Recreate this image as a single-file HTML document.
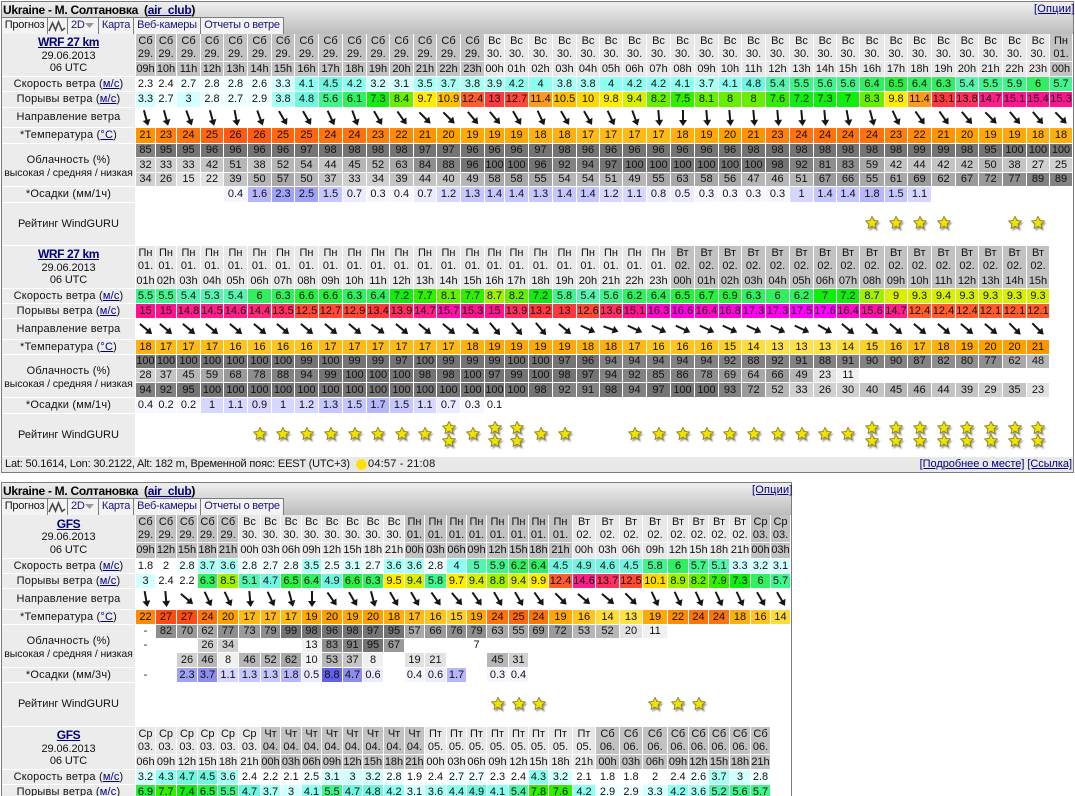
<!DOCTYPE html>
<html><head><meta charset="utf-8"><title>WindGURU</title>
<style>
html,body{margin:0;padding:0;width:1075px;height:796px;overflow:hidden;background:#fff}
body{position:relative;font:11px "Liberation Sans",Arial,sans-serif;color:#111}
.box{position:absolute;left:1px;border:1px solid #7c7c7c;box-sizing:border-box;background:#fff}
.bar{position:absolute;left:2px;height:32px;background:linear-gradient(#efefef,#bcbcbc)}
.ttl{position:absolute;left:3px;font:bold 12px/14px "Liberation Sans",sans-serif;color:#000;white-space:pre;letter-spacing:-.3px}
a{color:#000080;text-decoration:underline}
.op{position:absolute;font-size:11px;line-height:13px;letter-spacing:.2px}
.tabs{position:absolute;left:2px;height:16px;width:282px;border-top:1px solid #7c7c7c;background:#f3f3f3;box-sizing:content-box}
.tabs b{position:absolute;top:0;height:16px;font-weight:normal;line-height:15px;text-align:center;border-right:1px solid #7c7c7c;box-sizing:border-box;letter-spacing:-.25px;color:#14147a;white-space:nowrap}
.tabs b.k{color:#111}
table{position:absolute;border-collapse:separate;border-spacing:0;table-layout:fixed}
td{padding:0;border-right:1px solid #fff;border-bottom:1px solid #fff;box-sizing:border-box;text-align:center;vertical-align:middle;white-space:nowrap;overflow:hidden;line-height:13px;font-size:11px;color:#111}
td.l{background:#ececec;letter-spacing:.2px;color:#111}
td.l a{color:#000080}
td.l.z{letter-spacing:0}
td.l.c{padding-top:4px}
td.l.c span{font-size:10.5px;letter-spacing:-.1px}
td.n{letter-spacing:-.1px;line-height:12.5px;padding-top:1px}
td.n a{font-weight:bold;font-size:12px;letter-spacing:-.4px}
.nb td:not(.l){border-bottom-color:transparent}
.h28 td{height:28px}.h16 td{height:16px}.h15 td{height:15px}.h14 td{height:14px}.h20 td{height:20px}.h21 td{height:21px}.h43 td{height:43px}.h44 td{height:44px}
.d{background:#c2c2c2}.e{background:#e8e8e8}
i{display:block;width:2px;height:11px;background:#161616;position:relative;margin:0 auto 5px;transform-origin:50% 8px}
i:after{content:"";position:absolute;left:-3px;top:10px;border-left:4px solid transparent;border-right:4px solid transparent;border-top:6px solid #161616}
.r0{transform:none}.r5{transform:rotate(-5deg)}.r10{transform:rotate(-10deg)}.r15{transform:rotate(-15deg)}.r20{transform:rotate(-20deg)}.r25{transform:rotate(-25deg)}.r30{transform:rotate(-30deg)}.r35{transform:rotate(-35deg)}.r40{transform:rotate(-40deg)}.r45{transform:rotate(-45deg)}.r50{transform:rotate(-50deg)}.r55{transform:rotate(-55deg)}.r60{transform:rotate(-60deg)}.r65{transform:rotate(-65deg)}.r70{transform:rotate(-70deg)}
.w3,.w4{background:#fff}.w5{background:#f0ffff}.w6{background:#d2ffff}.w7{background:#aafff5}.w8{background:#8cfff0}.w9{background:#70f5e0}.w10{background:#55f5b0}.w11{background:#40f58c}.w12{background:#30f060}.w13{background:#28f040}.w14{background:#10ee10}.w15{background:#30f000}.w16{background:#66f000}.w17{background:#a0f000}.w18{background:#d8f000}.w19{background:#ffec00}.w20{background:#ffd800}.w21{background:#ffc000}.w22{background:#ff9a20}.w23{background:#ff8030}.w24{background:#ff5c30}.w25{background:#ff4838}.w26{background:#ff3840}.w27{background:#ff3060}.w28{background:#ff2878}.w29{background:#ff1e88}.w30{background:#ff1490}.w31{background:#ff10a8}.w32{background:#ff08c8}.w33{background:#ff00e0}.w34{background:#ff00f0}.w35{background:#ff00ff}
.t13{background:#ffe24a}.t14{background:#ffdc3c}.t15{background:#ffd02c}.t16{background:#ffc420}.t17{background:#ffba18}.t18{background:#ffb010}.t19{background:#ffa808}.t20{background:#ffa000}.t21{background:#ff9400}.t22{background:#ff8a08}.t23{background:#ff800e}.t24{background:#ff7210}.t25{background:#ff6612}.t26{background:#ff5a14}.t27{background:#ff4c14}
.g1{background:#f0f0f0}.g2{background:#e2e2e2}.g3{background:#d0d0d0}.g4{background:#c4c4c4}.g5{background:#b6b6b6}.g6{background:#a8a8a8}.g7{background:#9a9a9a}.g8{background:#8e8e8e}.g9{background:#828282}.g10{background:#747474}
.q1{background:#f6f6ff}.q2{background:#ebebff}.q3{background:#d6d6ff}.q4{background:#c6c6ff}.q5{background:#b6b6fb}.q6{background:#a2a2f4}.q7{background:#8c8cec}.q8{background:#6060e8}
svg.s{display:block;width:18px;height:18px;margin:0 auto 0 calc(50% - 8px)}
td.x svg.s{margin-top:-2px;margin-bottom:-5px}
td.x svg.s:last-child{margin-top:0;margin-bottom:-2px}
.foot{position:absolute;left:2px;top:457px;width:1071px;height:15px;background:#e8e8e8;line-height:15px;font-size:11px;letter-spacing:-.18px;white-space:nowrap}
</style></head><body>
<svg width="0" height="0" style="position:absolute"><defs><filter id="b" x="-30%" y="-30%" width="160%" height="160%"><feGaussianBlur stdDeviation=".9"/></filter>
<symbol id="st" viewBox="0 0 18 18"><polygon points="9.5,2.5 11.5,7.25 16.6,7.7 12.7,11 13.9,16.1 9.5,13.4 5.1,16.1 6.3,11 2.4,7.7 7.5,7.25" fill="#555" opacity=".6" filter="url(#b)"/><polygon points="8,1.300 9.900,5.500 14.500,5.900 11,9 12,13.500 8,11.100 4,13.500 5,9 1.500,5.900 6.100,5.500" fill="#efe400" stroke="#8f8420" stroke-width=".9" stroke-linejoin="round"/></symbol></defs></svg>

<div class="box" style="top:1px;width:1073px;height:472px"></div>
<div class="bar" style="top:2px;width:1071px"></div>
<div class="ttl" style="top:3px">Ukraine - М. Солтановка  (<a>air_club</a>)</div>
<a class="op" style="left:1034px;top:3px">[Опции]</a>
<div class="tabs" style="top:17px">
<b class="k" style="left:0;width:46px">Прогноз</b><b style="left:46px;width:20px"><svg width="19" height="14" style="display:block;margin-top:1px"><path d="M1 12 L4.500 4 L7.500 11 L10.500 3 L14 11.500 L17 9" fill="none" stroke="#4a4a4a" stroke-width="1.600"/></svg></b><b style="left:66px;width:31px;text-align:left;padding-left:3px">2D<svg width="10" height="6" style="position:absolute;left:17px;top:5px"><path d="M0 0H9L4.500 5Z" fill="#999"/></svg></b><b style="left:97px;width:35px">Карта</b><b style="left:132px;width:67px">Веб-камеры</b><b style="left:199px;width:83px">Отчеты о ветре</b>
</div>

<table style="left:2px;top:34px;width:1071px">
<colgroup><col width="134"><col width="20"><col width="21"><col width="24"><col width="23"><col width="24"><col width="24"><col width="23"><col width="24"><col width="24"><col width="24"><col width="23"><col width="24"><col width="23"><col width="24"><col width="24"><col width="20"><col width="24"><col width="24"><col width="24"><col width="23"><col width="23"><col width="24"><col width="24"><col width="24"><col width="24"><col width="23"><col width="24"><col width="24"><col width="24"><col width="23"><col width="23"><col width="25"><col width="23"><col width="24"><col width="24"><col width="23"><col width="24"><col width="24"><col width="23"><col width="23"></colgroup>
<tr class="h28"><td class="l n" rowspan="2"><a>WRF 27 km</a><br>29.06.2013<br>06 UTC</td>
<td class=d>Сб<br>29.<td class=d>Сб<br>29.<td class=d>Сб<br>29.<td class=d>Сб<br>29.<td class=d>Сб<br>29.<td class=d>Сб<br>29.<td class=d>Сб<br>29.<td class=d>Сб<br>29.<td class=d>Сб<br>29.<td class=d>Сб<br>29.<td class=d>Сб<br>29.<td class=d>Сб<br>29.<td class=d>Сб<br>29.<td class=d>Сб<br>29.<td class=d>Сб<br>29.
<td class=e>Вс<br>30.<td class=e>Вс<br>30.<td class=e>Вс<br>30.<td class=e>Вс<br>30.<td class=e>Вс<br>30.<td class=e>Вс<br>30.<td class=e>Вс<br>30.<td class=e>Вс<br>30.<td class=e>Вс<br>30.<td class=e>Вс<br>30.<td class=e>Вс<br>30.<td class=e>Вс<br>30.<td class=e>Вс<br>30.<td class=e>Вс<br>30.<td class=e>Вс<br>30.<td class=e>Вс<br>30.<td class=e>Вс<br>30.<td class=e>Вс<br>30.<td class=e>Вс<br>30.<td class=e>Вс<br>30.<td class=e>Вс<br>30.<td class=e>Вс<br>30.<td class=e>Вс<br>30.<td class=e>Вс<br>30.
<td class=d>Пн<br>01.</tr>
<tr class="h15"><td class=d>09h<td class=d>10h<td class=d>11h<td class=d>12h<td class=d>13h<td class=d>14h<td class=d>15h<td class=d>16h<td class=d>17h<td class=d>18h<td class=d>19h<td class=d>20h<td class=d>21h<td class=d>22h<td class=d>23h
<td class=e>00h<td class=e>01h<td class=e>02h<td class=e>03h<td class=e>04h<td class=e>05h<td class=e>06h<td class=e>07h<td class=e>08h<td class=e>09h<td class=e>10h<td class=e>11h<td class=e>12h<td class=e>13h<td class=e>14h<td class=e>15h<td class=e>16h<td class=e>17h<td class=e>18h<td class=e>19h<td class=e>20h<td class=e>21h<td class=e>22h<td class=e>23h
<td class=d>00h</tr>
<tr class="h15"><td class=l>Скорость ветра (<a>м/с</a>)
<td class=w4>2.3<td class=w4>2.4<td class=w5>2.7<td class=w5>2.8<td class=w5>2.8<td class=w5>2.6<td class=w6>3.3<td class=w8>4.1<td class=w9>4.5<td class=w8>4.2<td class=w6>3.2<td class=w6>3.1<td class=w7>3.5<td class=w7>3.7<td class=w7>3.8<td class=w7>3.9<td class=w8>4.2<td class=w8>4<td class=w7>3.8<td class=w7>3.8<td class=w8>4<td class=w8>4.2<td class=w8>4.2<td class=w8>4.1<td class=w7>3.7<td class=w8>4.1<td class=w9>4.8<td class=w10>5.4<td class=w11>5.5<td class=w11>5.6<td class=w11>5.6<td class=w12>6.4<td class=w13>6.5<td class=w12>6.4<td class=w12>6.3<td class=w10>5.4<td class=w11>5.5<td class=w11>5.9<td class=w12>6<td class=w11>5.7</tr>
<tr class="h16"><td class=l>Порывы ветра (<a>м/с</a>)
<td class=w6>3.3<td class=w5>2.7<td class=w6>3<td class=w5>2.8<td class=w5>2.7<td class=w5>2.9<td class=w7>3.8<td class=w9>4.8<td class=w11>5.6<td class=w12>6.1<td class=w14>7.3<td class=w16>8.4<td class=w19>9.7<td class=w21>10.9<td class=w24>12.4<td class=w26>13<td class=w25>12.7<td class=w22>11.4<td class=w21>10.5<td class=w20>10<td class=w19>9.8<td class=w18>9.4<td class=w16>8.2<td class=w15>7.5<td class=w16>8.1<td class=w16>8<td class=w16>8<td class=w15>7.6<td class=w14>7.2<td class=w14>7.3<td class=w14>7<td class=w16>8.3<td class=w19>9.8<td class=w22>11.4<td class=w26>13.1<td class=w27>13.8<td class=w29>14.7<td class=w30>15.1<td class=w30>15.4<td class=w30>15.3</tr>
<tr class="h20"><td class=l>Направление ветра
<td><i class=r15></i><td><i class=r15></i><td><i class=r20></i><td><i class=r15></i><td><i class=r10></i><td><i class=r20></i><td><i class=r30></i><td><i class=r30></i><td><i class=r25></i><td><i class=r20></i><td><i class=r30></i><td><i class=r35></i><td><i class=r45></i><td><i class=r45></i><td><i class=r40></i><td><i class=r40></i><td><i class=r30></i><td><i class=r25></i><td><i class=r30></i><td><i class=r30></i><td><i class=r25></i><td><i class=r20></i><td><i class=r5></i><td><i class=r0></i><td><i class=r5></i><td><i class=r5></i><td><i class=r5></i><td><i class=r5></i><td><i class=r5></i><td><i class=r5></i><td><i class=r10></i><td><i class=r15></i><td><i class=r25></i><td><i class=r35></i><td><i class=r35></i><td><i class=r40></i><td><i class=r45></i><td><i class=r40></i><td><i class=r40></i><td><i class=r45></i></tr>
<tr class="h16"><td class=l>*Температура (<a>°C</a>)
<td class=t21>21<td class=t23>23<td class=t24>24<td class=t25>25<td class=t26>26<td class=t26>26<td class=t25>25<td class=t25>25<td class=t24>24<td class=t24>24<td class=t23>23<td class=t22>22<td class=t21>21<td class=t20>20<td class=t19>19<td class=t19>19<td class=t19>19<td class=t18>18<td class=t18>18<td class=t17>17<td class=t17>17<td class=t17>17<td class=t17>17<td class=t18>18<td class=t19>19<td class=t20>20<td class=t21>21<td class=t23>23<td class=t24>24<td class=t24>24<td class=t24>24<td class=t24>24<td class=t23>23<td class=t22>22<td class=t21>21<td class=t20>20<td class=t19>19<td class=t19>19<td class=t18>18<td class=t18>18</tr>
<tr class="h14"><td class="l c" rowspan="3">Облачность (%)<br><span>высокая / средняя / низкая</span>
<td class=g9>85<td class=g10>95<td class=g10>95<td class=g10>96<td class=g10>96<td class=g10>96<td class=g10>96<td class=g10>97<td class=g10>98<td class=g10>98<td class=g10>98<td class=g10>98<td class=g10>97<td class=g10>97<td class=g10>96<td class=g10>96<td class=g10>96<td class=g10>97<td class=g10>98<td class=g10>96<td class=g10>96<td class=g10>96<td class=g10>96<td class=g10>96<td class=g10>96<td class=g10>96<td class=g10>98<td class=g10>98<td class=g10>98<td class=g10>98<td class=g10>98<td class=g10>98<td class=g10>98<td class=g10>99<td class=g10>99<td class=g10>98<td class=g10>95<td class=g10>100<td class=g10>100<td class=g10>100</tr>
<tr class="h15"><td class=g3>32<td class=g3>33<td class=g3>33<td class=g4>42<td class=g5>51<td class=g4>38<td class=g5>52<td class=g5>54<td class=g4>44<td class=g5>45<td class=g5>52<td class=g6>63<td class=g8>84<td class=g9>88<td class=g10>96<td class=g10>100<td class=g10>100<td class=g10>96<td class=g9>92<td class=g9>94<td class=g10>97<td class=g10>100<td class=g10>100<td class=g10>100<td class=g10>100<td class=g10>100<td class=g10>100<td class=g10>98<td class=g9>92<td class=g8>81<td class=g8>83<td class=g6>59<td class=g4>42<td class=g4>44<td class=g4>42<td class=g4>42<td class=g5>50<td class=g4>38<td class=g3>27<td class=g3>25</tr>
<tr class="h14"><td class=g3>34<td class=g3>26<td class=g2>15<td class=g2>22<td class=g4>39<td class=g5>50<td class=g6>57<td class=g5>50<td class=g4>37<td class=g3>33<td class=g3>34<td class=g4>39<td class=g4>44<td class=g4>40<td class=g5>49<td class=g6>58<td class=g6>58<td class=g6>55<td class=g5>54<td class=g5>54<td class=g5>51<td class=g5>49<td class=g6>55<td class=g6>63<td class=g6>58<td class=g6>56<td class=g5>47<td class=g5>46<td class=g5>51<td class=g7>67<td class=g7>66<td class=g6>55<td class=g6>61<td class=g7>69<td class=g6>62<td class=g7>67<td class=g7>72<td class=g8>77<td class=g9>89<td class=g9>89</tr>
<tr class="h16"><td class=l>*Осадки (мм/1ч)
<td colspan="4"><td class=q1>0.4<td class=q5>1.6<td class=q6>2.3<td class=q6>2.5<td class=q4>1.5<td class=q2>0.7<td class=q1>0.3<td class=q1>0.4<td class=q2>0.7<td class=q3>1.2<td class=q4>1.3<td class=q4>1.4<td class=q4>1.4<td class=q4>1.3<td class=q4>1.4<td class=q4>1.4<td class=q3>1.2<td class=q3>1.1<td class=q2>0.8<td class=q2>0.5<td class=q1>0.3<td class=q1>0.3<td class=q1>0.3<td class=q1>0.3<td class=q3>1<td class=q4>1.4<td class=q4>1.4<td class=q5>1.8<td class=q4>1.5<td class=q3>1.1<td colspan="6"></tr>
<tr class="h43"><td class="l z">Рейтинг WindGURU
<td colspan="31"><td><svg class=s><use href="#st"/></svg><td><svg class=s><use href="#st"/></svg><td><svg class=s><use href="#st"/></svg><td><svg class=s><use href="#st"/></svg><td colspan="2"><td><svg class=s><use href="#st"/></svg><td><svg class=s><use href="#st"/></svg><td></tr>
</table>

<table style="left:2px;top:246px;width:1071px">
<colgroup><col width="134"><col width="20"><col width="21"><col width="24"><col width="23"><col width="24"><col width="24"><col width="23"><col width="24"><col width="24"><col width="24"><col width="23"><col width="24"><col width="23"><col width="24"><col width="24"><col width="20"><col width="24"><col width="24"><col width="24"><col width="23"><col width="23"><col width="24"><col width="24"><col width="24"><col width="24"><col width="23"><col width="24"><col width="24"><col width="24"><col width="23"><col width="23"><col width="25"><col width="23"><col width="24"><col width="24"><col width="23"><col width="24"><col width="24"><col width="23"><col width="23"></colgroup>
<tr class="h28 nb"><td class="l n" rowspan="2"><a>WRF 27 km</a><br>29.06.2013<br>06 UTC</td>
<td class=e>Пн<br>01.<td class=e>Пн<br>01.<td class=e>Пн<br>01.<td class=e>Пн<br>01.<td class=e>Пн<br>01.<td class=e>Пн<br>01.<td class=e>Пн<br>01.<td class=e>Пн<br>01.<td class=e>Пн<br>01.<td class=e>Пн<br>01.<td class=e>Пн<br>01.<td class=e>Пн<br>01.<td class=e>Пн<br>01.<td class=e>Пн<br>01.<td class=e>Пн<br>01.<td class=e>Пн<br>01.<td class=e>Пн<br>01.<td class=e>Пн<br>01.<td class=e>Пн<br>01.<td class=e>Пн<br>01.<td class=e>Пн<br>01.<td class=e>Пн<br>01.<td class=e>Пн<br>01.
<td class=d>Вт<br>02.<td class=d>Вт<br>02.<td class=d>Вт<br>02.<td class=d>Вт<br>02.<td class=d>Вт<br>02.<td class=d>Вт<br>02.<td class=d>Вт<br>02.<td class=d>Вт<br>02.<td class=d>Вт<br>02.<td class=d>Вт<br>02.<td class=d>Вт<br>02.<td class=d>Вт<br>02.<td class=d>Вт<br>02.<td class=d>Вт<br>02.<td class=d>Вт<br>02.<td class=d>Вт<br>02.<td></tr>
<tr class="h15"><td class=e>01h<td class=e>02h<td class=e>03h<td class=e>04h<td class=e>05h<td class=e>06h<td class=e>07h<td class=e>08h<td class=e>09h<td class=e>10h<td class=e>11h<td class=e>12h<td class=e>13h<td class=e>14h<td class=e>15h<td class=e>16h<td class=e>17h<td class=e>18h<td class=e>19h<td class=e>20h<td class=e>21h<td class=e>22h<td class=e>23h
<td class=d>00h<td class=d>01h<td class=d>02h<td class=d>03h<td class=d>04h<td class=d>05h<td class=d>06h<td class=d>07h<td class=d>08h<td class=d>09h<td class=d>10h<td class=d>11h<td class=d>12h<td class=d>13h<td class=d>14h<td class=d>15h<td></tr>
<tr class="h15"><td class=l>Скорость ветра (<a>м/с</a>)
<td class=w11>5.5<td class=w11>5.5<td class=w10>5.4<td class=w10>5.3<td class=w10>5.4<td class=w12>6<td class=w12>6.3<td class=w13>6.6<td class=w13>6.6<td class=w12>6.3<td class=w12>6.4<td class=w14>7.2<td class=w15>7.7<td class=w16>8.1<td class=w15>7.7<td class=w17>8.7<td class=w16>8.2<td class=w14>7.2<td class=w11>5.8<td class=w10>5.4<td class=w11>5.6<td class=w12>6.2<td class=w12>6.4<td class=w13>6.5<td class=w13>6.7<td class=w13>6.9<td class=w12>6.3<td class=w12>6<td class=w12>6.2<td class=w14>7<td class=w14>7.2<td class=w17>8.7<td class=w18>9<td class=w18>9.3<td class=w18>9.4<td class=w18>9.3<td class=w18>9.3<td class=w18>9.3<td class=w18>9.3<td></tr>
<tr class="h15"><td class=l>Порывы ветра (<a>м/с</a>)
<td class=w30>15<td class=w30>15<td class=w29>14.8<td class=w29>14.5<td class=w29>14.6<td class=w28>14.4<td class=w27>13.5<td class=w25>12.5<td class=w25>12.7<td class=w25>12.9<td class=w26>13.4<td class=w27>13.9<td class=w29>14.7<td class=w31>15.7<td class=w30>15.3<td class=w30>15<td class=w27>13.9<td class=w26>13.2<td class=w26>13<td class=w25>12.6<td class=w27>13.6<td class=w30>15.1<td class=w32>16.3<td class=w33>16.6<td class=w32>16.4<td class=w33>16.8<td class=w34>17.3<td class=w34>17.3<td class=w35>17.5<td class=w35>17.6<td class=w32>16.4<td class=w31>15.6<td class=w29>14.7<td class=w24>12.4<td class=w24>12.4<td class=w24>12.4<td class=w24>12.1<td class=w24>12.1<td class=w24>12.1<td></tr>
<tr class="h21"><td class=l>Направление ветра
<td><i class=r50></i><td><i class=r50></i><td><i class=r50></i><td><i class=r50></i><td><i class=r50></i><td><i class=r50></i><td><i class=r50></i><td><i class=r50></i><td><i class=r50></i><td><i class=r50></i><td><i class=r55></i><td><i class=r50></i><td><i class=r50></i><td><i class=r50></i><td><i class=r50></i><td><i class=r40></i><td><i class=r40></i><td><i class=r40></i><td><i class=r50></i><td><i class=r65></i><td><i class=r70></i><td><i class=r65></i><td><i class=r65></i><td><i class=r65></i><td><i class=r65></i><td><i class=r65></i><td><i class=r65></i><td><i class=r65></i><td><i class=r65></i><td><i class=r60></i><td><i class=r50></i><td><i class=r50></i><td><i class=r50></i><td><i class=r50></i><td><i class=r50></i><td><i class=r50></i><td><i class=r50></i><td><i class=r45></i><td><i class=r45></i><td></tr>
<tr class="h15"><td class=l>*Температура (<a>°C</a>)
<td class=t18>18<td class=t17>17<td class=t17>17<td class=t17>17<td class=t16>16<td class=t16>16<td class=t16>16<td class=t16>16<td class=t17>17<td class=t17>17<td class=t17>17<td class=t17>17<td class=t17>17<td class=t17>17<td class=t18>18<td class=t19>19<td class=t19>19<td class=t19>19<td class=t19>19<td class=t18>18<td class=t18>18<td class=t17>17<td class=t16>16<td class=t16>16<td class=t16>16<td class=t15>15<td class=t14>14<td class=t13>13<td class=t13>13<td class=t13>13<td class=t14>14<td class=t15>15<td class=t16>16<td class=t17>17<td class=t18>18<td class=t19>19<td class=t20>20<td class=t20>20<td class=t21>21<td></tr>
<tr class="h14"><td class="l c" rowspan="3">Облачность (%)<br><span>высокая / средняя / низкая</span>
<td class=g10>100<td class=g10>100<td class=g10>100<td class=g10>100<td class=g10>100<td class=g10>100<td class=g10>100<td class=g10>99<td class=g10>100<td class=g10>99<td class=g10>99<td class=g10>97<td class=g10>100<td class=g10>99<td class=g10>99<td class=g10>99<td class=g10>100<td class=g10>100<td class=g10>97<td class=g10>96<td class=g9>94<td class=g9>94<td class=g9>94<td class=g9>94<td class=g9>94<td class=g9>92<td class=g9>88<td class=g9>92<td class=g9>91<td class=g9>88<td class=g9>91<td class=g9>90<td class=g9>90<td class=g9>87<td class=g8>82<td class=g8>80<td class=g8>77<td class=g6>62<td class=g5>48<td></tr>
<tr class="h14"><td class=g3>28<td class=g4>37<td class=g5>45<td class=g6>59<td class=g7>68<td class=g8>78<td class=g9>88<td class=g9>94<td class=g10>99<td class=g10>100<td class=g10>100<td class=g10>100<td class=g10>98<td class=g10>98<td class=g10>100<td class=g10>97<td class=g10>99<td class=g10>100<td class=g10>98<td class=g10>97<td class=g9>94<td class=g9>92<td class=g9>85<td class=g9>86<td class=g8>78<td class=g7>69<td class=g6>64<td class=g7>66<td class=g5>49<td class=g2>23<td class=g1>11<td colspan="9"></tr>
<tr class="h15"><td class=g9>94<td class=g9>92<td class=g10>95<td class=g10>100<td class=g10>100<td class=g10>100<td class=g10>100<td class=g10>100<td class=g10>100<td class=g10>100<td class=g10>100<td class=g10>100<td class=g10>100<td class=g10>100<td class=g10>100<td class=g10>100<td class=g10>100<td class=g10>98<td class=g9>92<td class=g9>91<td class=g10>98<td class=g9>94<td class=g10>97<td class=g10>100<td class=g10>100<td class=g9>93<td class=g7>72<td class=g5>52<td class=g3>33<td class=g3>26<td class=g3>30<td class=g4>40<td class=g5>45<td class=g5>46<td class=g4>44<td class=g4>39<td class=g3>29<td class=g4>35<td class=g2>23<td></tr>
<tr class="h16"><td class=l>*Осадки (мм/1ч)
<td class=q1>0.4<td class=q1>0.2<td class=q1>0.2<td class=q3>1<td class=q3>1.1<td class=q3>0.9<td class=q3>1<td class=q3>1.2<td class=q4>1.3<td class=q4>1.5<td class=q5>1.7<td class=q4>1.5<td class=q3>1.1<td class=q2>0.7<td class=q1>0.3<td>0.1<td colspan="24"></tr>
<tr class="h43"><td class="l z">Рейтинг WindGURU
<td colspan="5"><td><svg class=s><use href="#st"/></svg><td><svg class=s><use href="#st"/></svg><td><svg class=s><use href="#st"/></svg><td><svg class=s><use href="#st"/></svg><td><svg class=s><use href="#st"/></svg><td><svg class=s><use href="#st"/></svg><td><svg class=s><use href="#st"/></svg><td><svg class=s><use href="#st"/></svg><td class=x><svg class=s><use href="#st"/></svg><svg class=s><use href="#st"/></svg><td><svg class=s><use href="#st"/></svg><td class=x><svg class=s><use href="#st"/></svg><svg class=s><use href="#st"/></svg><td class=x><svg class=s><use href="#st"/></svg><svg class=s><use href="#st"/></svg><td><svg class=s><use href="#st"/></svg><td><svg class=s><use href="#st"/></svg><td colspan="2"><td><svg class=s><use href="#st"/></svg><td><svg class=s><use href="#st"/></svg><td><svg class=s><use href="#st"/></svg><td><svg class=s><use href="#st"/></svg><td><svg class=s><use href="#st"/></svg><td><svg class=s><use href="#st"/></svg><td><svg class=s><use href="#st"/></svg><td><svg class=s><use href="#st"/></svg><td><svg class=s><use href="#st"/></svg><td><svg class=s><use href="#st"/></svg><td class=x><svg class=s><use href="#st"/></svg><svg class=s><use href="#st"/></svg><td class=x><svg class=s><use href="#st"/></svg><svg class=s><use href="#st"/></svg><td class=x><svg class=s><use href="#st"/></svg><svg class=s><use href="#st"/></svg><td class=x><svg class=s><use href="#st"/></svg><svg class=s><use href="#st"/></svg><td class=x><svg class=s><use href="#st"/></svg><svg class=s><use href="#st"/></svg><td class=x><svg class=s><use href="#st"/></svg><svg class=s><use href="#st"/></svg><td class=x><svg class=s><use href="#st"/></svg><svg class=s><use href="#st"/></svg><td class=x><svg class=s><use href="#st"/></svg><svg class=s><use href="#st"/></svg><td></tr>
</table>

<div class="foot"><span style="position:absolute;left:3px">Lat: 50.1614, Lon: 30.2122, Alt: 182 m, Временной пояс: EEST (UTC+3)</span><span style="position:absolute;left:354px;top:2px;width:11px;height:11px;border-radius:50%;background:radial-gradient(#ffe000 55%,#fff2a0)"></span><span style="position:absolute;left:366px;letter-spacing:.2px">04:57 - 21:08</span><span style="position:absolute;right:1px;font-size:11px;letter-spacing:-.05px"><a>[Подробнее о месте]</a> <a>[Ссылка]</a></span></div>

<div class="box" style="top:482px;width:791px;height:330px"></div>
<div class="bar" style="top:483px;width:789px"></div>
<div class="ttl" style="top:484px">Ukraine - М. Солтановка  (<a>air_club</a>)</div>
<a class="op" style="left:752px;top:484px">[Опции]</a>
<div class="tabs" style="top:498px">
<b class="k" style="left:0;width:46px">Прогноз</b><b style="left:46px;width:20px"><svg width="19" height="14" style="display:block;margin-top:1px"><path d="M1 12 L4.500 4 L7.500 11 L10.500 3 L14 11.500 L17 9" fill="none" stroke="#4a4a4a" stroke-width="1.600"/></svg></b><b style="left:66px;width:31px;text-align:left;padding-left:3px">2D<svg width="10" height="6" style="position:absolute;left:17px;top:5px"><path d="M0 0H9L4.500 5Z" fill="#999"/></svg></b><b style="left:97px;width:35px">Карта</b><b style="left:132px;width:67px">Веб-камеры</b><b style="left:199px;width:83px">Отчеты о ветре</b>
</div>

<table style="left:2px;top:515px;width:789px">
<colgroup><col width="134"><col width="20"><col width="21"><col width="21"><col width="20"><col width="21"><col width="22"><col width="20"><col width="21"><col width="20"><col width="21"><col width="20"><col width="21"><col width="21"><col width="20"><col width="22"><col width="20"><col width="20"><col width="22"><col width="20"><col width="20"><col width="24"><col width="23"><col width="24"><col width="23"><col width="25"><col width="21"><col width="20"><col width="21"><col width="21"><col width="20"><col width="20"></colgroup>
<tr class="h28"><td class="l n" rowspan="2"><a>GFS</a><br>29.06.2013<br>06 UTC</td>
<td class=d>Сб<br>29.<td class=d>Сб<br>29.<td class=d>Сб<br>29.<td class=d>Сб<br>29.<td class=d>Сб<br>29.
<td class=e>Вс<br>30.<td class=e>Вс<br>30.<td class=e>Вс<br>30.<td class=e>Вс<br>30.<td class=e>Вс<br>30.<td class=e>Вс<br>30.<td class=e>Вс<br>30.<td class=e>Вс<br>30.
<td class=d>Пн<br>01.<td class=d>Пн<br>01.<td class=d>Пн<br>01.<td class=d>Пн<br>01.<td class=d>Пн<br>01.<td class=d>Пн<br>01.<td class=d>Пн<br>01.<td class=d>Пн<br>01.
<td class=e>Вт<br>02.<td class=e>Вт<br>02.<td class=e>Вт<br>02.<td class=e>Вт<br>02.<td class=e>Вт<br>02.<td class=e>Вт<br>02.<td class=e>Вт<br>02.<td class=e>Вт<br>02.
<td class=d>Ср<br>03.<td class=d>Ср<br>03.</tr>
<tr class="h16"><td class=d>09h<td class=d>12h<td class=d>15h<td class=d>18h<td class=d>21h
<td class=e>00h<td class=e>03h<td class=e>06h<td class=e>09h<td class=e>12h<td class=e>15h<td class=e>18h<td class=e>21h
<td class=d>00h<td class=d>03h<td class=d>06h<td class=d>09h<td class=d>12h<td class=d>15h<td class=d>18h<td class=d>21h
<td class=e>00h<td class=e>03h<td class=e>06h<td class=e>09h<td class=e>12h<td class=e>15h<td class=e>18h<td class=e>21h
<td class=d>00h<td class=d>03h</tr>
<tr class="h15"><td class=l>Скорость ветра (<a>м/с</a>)
<td class=w3>1.8<td class=w4>2<td class=w5>2.8<td class=w7>3.7<td class=w7>3.6<td class=w5>2.8<td class=w5>2.7<td class=w5>2.8<td class=w7>3.5<td class=w5>2.5<td class=w6>3.1<td class=w5>2.7<td class=w7>3.6<td class=w7>3.6<td class=w5>2.8<td class=w8>4<td class=w10>5<td class=w11>5.9<td class=w12>6.2<td class=w12>6.4<td class=w9>4.5<td class=w9>4.9<td class=w9>4.6<td class=w9>4.5<td class=w11>5.8<td class=w12>6<td class=w11>5.7<td class=w10>5.1<td class=w6>3.3<td class=w6>3.2<td class=w6>3.1</tr>
<tr class="h15"><td class=l>Порывы ветра (<a>м/с</a>)
<td class=w6>3<td class=w4>2.4<td class=w4>2.2<td class=w12>6.3<td class=w17>8.5<td class=w10>5.1<td class=w9>4.7<td class=w13>6.5<td class=w12>6.4<td class=w9>4.9<td class=w13>6.6<td class=w12>6.3<td class=w19>9.5<td class=w18>9.4<td class=w11>5.8<td class=w19>9.7<td class=w18>9.4<td class=w17>8.8<td class=w18>9.4<td class=w19>9.9<td class=w24>12.4<td class=w29>14.6<td class=w27>13.7<td class=w25>12.5<td class=w20>10.1<td class=w17>8.9<td class=w16>8.2<td class=w15>7.9<td class=w14>7.3<td class=w12>6<td class=w11>5.7</tr>
<tr class="h21"><td class=l>Направление ветра
<td><i class=r10></i><td><i class=r5></i><td><i class=r50></i><td><i class=r25></i><td><i class=r25></i><td><i class=r5></i><td><i class=r25></i><td><i class=r15></i><td><i class=r0></i><td><i class=r35></i><td><i class=r30></i><td><i class=r15></i><td><i class=r30></i><td><i class=r30></i><td><i class=r35></i><td><i class=r40></i><td><i class=r35></i><td><i class=r30></i><td><i class=r30></i><td><i class=r35></i><td><i class=r45></i><td><i class=r50></i><td><i class=r50></i><td><i class=r45></i><td><i class=r25></i><td><i class=r25></i><td><i class=r25></i><td><i class=r25></i><td><i class=r25></i><td><i class=r30></i><td><i class=r30></i></tr>
<tr class="h15"><td class=l>*Температура (<a>°C</a>)
<td class=t22>22<td class=t27>27<td class=t27>27<td class=t24>24<td class=t20>20<td class=t17>17<td class=t17>17<td class=t17>17<td class=t19>19<td class=t20>20<td class=t19>19<td class=t20>20<td class=t18>18<td class=t17>17<td class=t16>16<td class=t15>15<td class=t19>19<td class=t24>24<td class=t25>25<td class=t24>24<td class=t19>19<td class=t16>16<td class=t14>14<td class=t13>13<td class=t19>19<td class=t22>22<td class=t24>24<td class=t24>24<td class=t18>18<td class=t16>16<td class=t14>14</tr>
<tr class="h14"><td class="l c" rowspan="3">Облачность (%)<br><span>высокая / средняя / низкая</span>
<td>-<td class=g8>82<td class=g7>70<td class=g6>62<td class=g8>77<td class=g7>73<td class=g8>79<td class=g10>99<td class=g10>98<td class=g10>96<td class=g10>98<td class=g10>97<td class=g10>95<td class=g6>57<td class=g7>66<td class=g8>76<td class=g8>79<td class=g6>63<td class=g6>55<td class=g7>69<td class=g7>72<td class=g5>53<td class=g5>52<td class=g2>20<td class=g1>11<td colspan="6"></tr>
<tr class="h14"><td>-<td colspan="2"><td class=g3>26<td class=g3>34<td colspan="3"><td class=g1>13<td class=g8>83<td class=g9>91<td class=g10>95<td class=g7>67<td colspan="3"><td>7<td colspan="14"></tr>
<tr class="h15"><td colspan="2"><td class=g3>26<td class=g5>46<td class=g1>8<td class=g5>46<td class=g5>52<td class=g6>62<td class=g1>10<td class=g5>53<td class=g4>37<td class=g1>8<td><td class=g2>19<td class=g2>21<td colspan="2"><td class=g5>45<td class=g3>31<td colspan="12"></tr>
<tr class="h15"><td class=l>*Осадки (мм/3ч)
<td>-<td><td class=q6>2.3<td class=q7>3.7<td class=q3>1.1<td class=q4>1.3<td class=q4>1.3<td class=q5>1.8<td class=q2>0.5<td class=q8>8.8<td class=q7>4.7<td class=q2>0.6<td><td class=q1>0.4<td class=q2>0.6<td class=q5>1.7<td><td class=q1>0.3<td class=q1>0.4<td colspan="12"></tr>
<tr class="h44"><td class="l z">Рейтинг WindGURU
<td colspan="17"><td><svg class=s><use href="#st"/></svg><td><svg class=s><use href="#st"/></svg><td><svg class=s><use href="#st"/></svg><td colspan="4"><td><svg class=s><use href="#st"/></svg><td><svg class=s><use href="#st"/></svg><td><svg class=s><use href="#st"/></svg><td colspan="4"></tr>
</table>

<table style="left:2px;top:727px;width:789px">
<colgroup><col width="134"><col width="20"><col width="21"><col width="21"><col width="20"><col width="21"><col width="22"><col width="20"><col width="21"><col width="20"><col width="21"><col width="20"><col width="21"><col width="21"><col width="20"><col width="22"><col width="20"><col width="20"><col width="22"><col width="20"><col width="20"><col width="24"><col width="23"><col width="24"><col width="23"><col width="25"><col width="21"><col width="20"><col width="21"><col width="21"><col width="20"><col width="20"></colgroup>
<tr class="h28"><td class="l n" rowspan="2"><a>GFS</a><br>29.06.2013<br>06 UTC</td>
<td class=e>Ср<br>03.<td class=e>Ср<br>03.<td class=e>Ср<br>03.<td class=e>Ср<br>03.<td class=e>Ср<br>03.<td class=e>Ср<br>03.
<td class=d>Чт<br>04.<td class=d>Чт<br>04.<td class=d>Чт<br>04.<td class=d>Чт<br>04.<td class=d>Чт<br>04.<td class=d>Чт<br>04.<td class=d>Чт<br>04.<td class=d>Чт<br>04.
<td class=e>Пт<br>05.<td class=e>Пт<br>05.<td class=e>Пт<br>05.<td class=e>Пт<br>05.<td class=e>Пт<br>05.<td class=e>Пт<br>05.<td class=e>Пт<br>05.<td class=e>Пт<br>05.
<td class=d>Сб<br>06.<td class=d>Сб<br>06.<td class=d>Сб<br>06.<td class=d>Сб<br>06.<td class=d>Сб<br>06.<td class=d>Сб<br>06.<td class=d>Сб<br>06.<td class=d>Сб<br>06.<td></tr>
<tr class="h15"><td class=e>06h<td class=e>09h<td class=e>12h<td class=e>15h<td class=e>18h<td class=e>21h
<td class=d>00h<td class=d>03h<td class=d>06h<td class=d>09h<td class=d>12h<td class=d>15h<td class=d>18h<td class=d>21h
<td class=e>00h<td class=e>03h<td class=e>06h<td class=e>09h<td class=e>12h<td class=e>15h<td class=e>18h<td class=e>21h
<td class=d>00h<td class=d>03h<td class=d>06h<td class=d>09h<td class=d>12h<td class=d>15h<td class=d>18h<td class=d>21h<td></tr>
<tr class="h15"><td class=l>Скорость ветра (<a>м/с</a>)
<td class=w6>3.2<td class=w8>4.3<td class=w9>4.7<td class=w9>4.5<td class=w7>3.6<td class=w4>2.4<td class=w4>2.2<td class=w4>2.1<td class=w5>2.5<td class=w6>3.1<td class=w6>3<td class=w6>3.2<td class=w5>2.8<td class=w3>1.9<td class=w4>2.4<td class=w5>2.7<td class=w5>2.7<td class=w4>2.3<td class=w4>2.4<td class=w8>4.3<td class=w6>3.2<td class=w4>2.1<td class=w3>1.8<td class=w3>1.8<td class=w4>2<td class=w4>2.4<td class=w5>2.6<td class=w7>3.7<td class=w6>3<td class=w5>2.8<td></tr>
<tr class="h15"><td class=l>Порывы ветра (<a>м/с</a>)
<td class=w13>6.9<td class=w15>7.7<td class=w14>7.4<td class=w13>6.5<td class=w11>5.5<td class=w9>4.7<td class=w7>3.7<td class=w6>3<td class=w8>4.1<td class=w11>5.5<td class=w9>4.7<td class=w9>4.8<td class=w8>4.2<td class=w6>3.1<td class=w7>3.6<td class=w8>4.4<td class=w9>4.9<td class=w8>4.1<td class=w10>5.4<td class=w15>7.8<td class=w15>7.6<td class=w8>4.2<td class=w5>2.9<td class=w5>2.9<td class=w6>3.3<td class=w8>4.2<td class=w7>3.6<td class=w10>5.2<td class=w11>5.6<td class=w11>5.7<td></tr>
</table>
</body></html>
